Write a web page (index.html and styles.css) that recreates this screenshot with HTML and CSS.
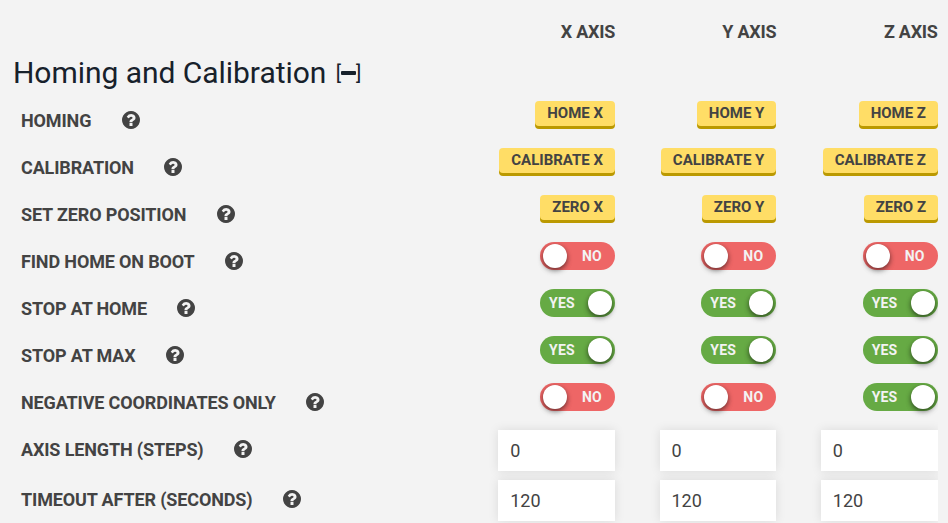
FILE: index.html
```
<!DOCTYPE html>
<html lang="en">
<head>
<meta charset="utf-8">
<title>Homing and Calibration</title>
<link rel="stylesheet" href="styles.css">
</head>
<body>
<svg class="defs" width="0" height="0"><symbol id="help" viewBox="128 128 1536 1536"><path d="M1024 1376v-192q0-14-9-23t-23-9h-192q-14 0-23 9t-9 23v192q0 14 9 23t23 9h192q14 0 23-9t9-23zm256-672q0-88-55.5-163t-138.5-116-170-41q-243 0-371 213-15 24 8 42l132 100q7 6 19 6 16 0 25-12 53-68 86-92 34-24 86-24 48 0 85.5 26t37.5 59q0 38-20 61t-68 45q-63 28-115.5 86.5t-52.5 125.5v36q0 14 9 23t23 9h192q14 0 23-9t9-23q0-19 21.5-49.5t54.5-49.5q32-18 49-28.5t46-35 44.5-48 28-60.5 12.5-81zm384 192q0 209-103 385.5t-279.5 279.5-385.5 103-385.5-103-279.5-279.5-103-385.5 103-385.5 279.5-279.5 385.5-103 385.5 103 279.5 279.5 103 385.5z"/></symbol></svg>
<main class="panel">
  <div class="row axes"><span></span><span class="axis">X AXIS</span><span class="axis">Y AXIS</span><span class="axis">Z AXIS</span></div>
  <h1 class="title">Homing and Calibration <span class="collapse">[<i class="minus"></i>]</span></h1>
  <div class="row"><label class="label">HOMING<svg class="help"><use href="#help"/></svg></label><button class="btn">HOME X</button><button class="btn">HOME Y</button><button class="btn">HOME Z</button></div>
  <div class="row"><label class="label">CALIBRATION<svg class="help"><use href="#help"/></svg></label><button class="btn">CALIBRATE X</button><button class="btn">CALIBRATE Y</button><button class="btn">CALIBRATE Z</button></div>
  <div class="row"><label class="label">SET ZERO POSITION<svg class="help"><use href="#help"/></svg></label><button class="btn">ZERO X</button><button class="btn">ZERO Y</button><button class="btn">ZERO Z</button></div>
  <div class="row"><label class="label">FIND HOME ON BOOT<svg class="help"><use href="#help"/></svg></label><button class="toggle no">NO</button><button class="toggle no">NO</button><button class="toggle no">NO</button></div>
  <div class="row"><label class="label">STOP AT HOME<svg class="help"><use href="#help"/></svg></label><button class="toggle yes">YES</button><button class="toggle yes">YES</button><button class="toggle yes">YES</button></div>
  <div class="row"><label class="label">STOP AT MAX<svg class="help"><use href="#help"/></svg></label><button class="toggle yes">YES</button><button class="toggle yes">YES</button><button class="toggle yes">YES</button></div>
  <div class="row"><label class="label">NEGATIVE COORDINATES ONLY<svg class="help"><use href="#help"/></svg></label><button class="toggle no">NO</button><button class="toggle no">NO</button><button class="toggle yes">YES</button></div>
  <div class="row fields"><label class="label">AXIS LENGTH (STEPS)<svg class="help"><use href="#help"/></svg></label><input class="field" value="0"><input class="field" value="0"><input class="field" value="0"></div>
  <div class="row fields"><label class="label">TIMEOUT AFTER (SECONDS)<svg class="help"><use href="#help"/></svg></label><input class="field" value="120"><input class="field" value="120"><input class="field" value="120"></div>
</main>
</body>
</html>
```
FILE: styles.css
```
* { box-sizing: border-box; }
body { margin: 0; height: 523px; overflow: hidden; background: #f3f3f3; color: #434343; font-family: Roboto, sans-serif; }
.defs { display: block; }
.panel { width: 938px; height: 523px; overflow: hidden; }
.row { display: grid; grid-template-columns: 1fr repeat(3, 116.67px); column-gap: 44.67px; height: 47px; padding: 4px 0.33px 0 21px; align-items: start; }
.axes { height: 52px; padding-top: 21px; }
.axis { font-size: 18px; font-weight: 700; line-height: 21px; letter-spacing: -0.25px; text-align: right; }
.title { display: flex; align-items: center; height: 45px; margin: 0; padding: 0 0 3px 13px; font-size: 30px; font-weight: 400; line-height: 42px; letter-spacing: -0.04px; color: #17212b; }
.collapse { display: flex; align-items: center; margin-left: 9.5px; font-size: 20px; }
.minus { width: 15px; height: 4px; border-radius: 1px; background: #17212b; }
.label { display: flex; align-items: center; gap: 30.3px; height: 38px; font-size: 18px; font-weight: 700; letter-spacing: -0.14px; white-space: nowrap; }
.help { width: 18px; height: 18px; fill: #434343; }
.btn { justify-self: end; height: 25px; padding: 0 12px; border: 0; border-radius: 4px; background: #fd6; box-shadow: 0 3px 0 #b90; color: #434343; font: 700 15px/25px Roboto, sans-serif; white-space: nowrap; }
.btn:nth-child(4) { padding: 0 11.7px; }
.toggle { position: relative; justify-self: end; width: 75px; height: 28px; margin-top: 0; border: 0; border-radius: 14px; padding: 0; color: #f3f3f3; font: 700 14px/28px Roboto, sans-serif; letter-spacing: 0.2px; }
.toggle::after { content: ""; position: absolute; top: 2px; width: 24px; height: 24px; border-radius: 50%; background: #fff; box-shadow: 0 2px 5px rgba(0,0,0,.5), 0 4px 6px rgba(0,0,0,.1); }
.no { background: #e66; padding-left: 42px; text-align: left; }
.no::after { left: 3px; }
.yes { background: #6a4; padding-left: 9px; text-align: left; }
.yes::after { right: 3px; }
.fields { height: 50px; }
.field { width: 100%; height: 41px; border: 0; border-radius: 0; padding: 0 11.8px; background: #fff; box-shadow: 0 0 10px rgba(0,0,0,.1); color: #434343; font: 400 18px Roboto, sans-serif; }
```
